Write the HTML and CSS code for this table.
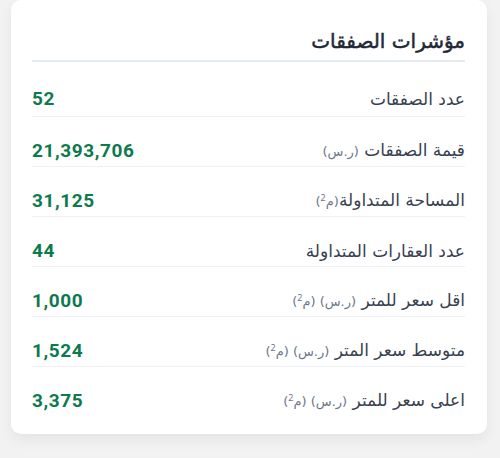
FILE: index.html
```html
<!DOCTYPE html>
<html lang="ar" dir="rtl">
<head>
<meta charset="utf-8">
<link rel="stylesheet" href="styles.css">
</head>
<body>
<div class="card">
  <h2 class="title">مؤشرات الصفقات</h2>
  <div class="list">
    <div class="row"><span class="label">عدد الصفقات</span><span class="value">52</span></div>
    <div class="row"><span class="label">قيمة الصفقات <span class="unit">(ر.س)</span></span><span class="value">21,393,706</span></div>
    <div class="row"><span class="label">المساحة المتداولة<span class="unit">(م<sup class="sq">2</sup>)</span></span><span class="value">31,125</span></div>
    <div class="row"><span class="label">عدد العقارات المتداولة</span><span class="value">44</span></div>
    <div class="row"><span class="label">اقل سعر للمتر <span class="unit">(ر.س) (م<sup class="sq">2</sup>)</span></span><span class="value">1,000</span></div>
    <div class="row"><span class="label">متوسط سعر المتر <span class="unit">(ر.س) (م<sup class="sq">2</sup>)</span></span><span class="value">1,524</span></div>
    <div class="row"><span class="label">اعلى سعر للمتر <span class="unit">(ر.س) (م<sup class="sq">2</sup>)</span></span><span class="value">3,375</span></div>
  </div>
</div>
</body>
</html>
```

FILE: styles.css
```css
html, body {
  margin: 0;
  padding: 0;
  background: #f2f2f2;
}
body {
  width: 500px;
  height: 458px;
  overflow: hidden;
  font-family: "DejaVu Sans", "Noto Sans", sans-serif;
}
.card {
  margin: 0 13px 0 11px;
  background: #ffffff;
  border-radius: 10px;
  box-shadow: 0 6px 14px rgba(0, 0, 0, 0.06);
  padding: 0 22px 0 21px;
  height: 434px;
  box-sizing: border-box;
  display: flex;
  flex-direction: column;
}
.title {
  margin: 0;
  padding-top: 27px;
  height: 33px;
  line-height: 28px;
  font-size: 20px;
  font-weight: 400;
  -webkit-text-stroke: 0.5px #1f2937;
  color: #1f2937;
  border-bottom: 2px solid #e3e9f2;
}
.list {
  padding-top: 2px;
}
.row {
  display: flex;
  justify-content: space-between;
  align-items: center;
  height: 50px;
  padding-top: 18px;
  box-sizing: border-box;
  border-bottom: 1px solid #eef0f3;
}
.row:first-child {
  height: 53px;
  padding-top: 17px;
}
.row:last-child {
  border-bottom: none;
}
.label {
  font-size: 17px;
  color: #374151;
  line-height: 20px;
}
.unit {
  font-size: 13px;
  color: #6b7689;
}
.sq {
  font-family: "Noto Sans", sans-serif;
  font-size: 9px;
  vertical-align: 5px;
  line-height: 0;
}
.value {
  direction: ltr;
  font-family: Roboto, "Noto Sans", sans-serif;
  font-weight: 700;
  font-size: 19px;
  letter-spacing: 0.6px;
  color: #0d7a4e;
  line-height: 20px;
}
```
